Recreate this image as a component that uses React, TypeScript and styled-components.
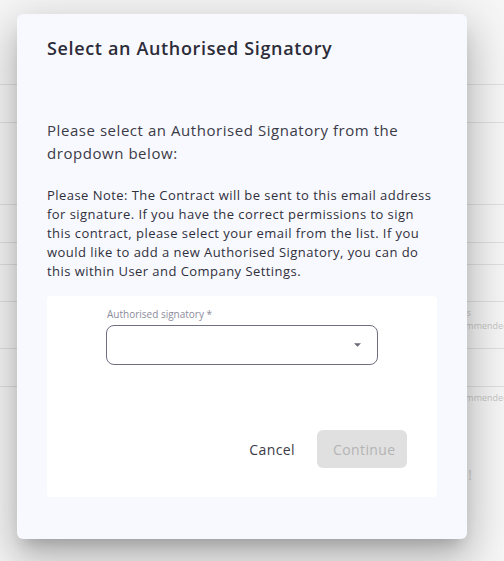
import React from "react";
import styled, { createGlobalStyle } from "styled-components";

const GlobalStyle = createGlobalStyle`
    html, body {
        margin: 0;
        padding: 0;
    }
    body {
        font-family: "Open Sans", "Liberation Sans", sans-serif;
        background: #f6f6f6;
    }
`;

const StyledPage = styled.div`
    position: relative;
    width: 504px;
    height: 561px;
    overflow: hidden;
    background: #f6f6f6;
`;

const StyledRows = styled.div`
    display: flex;
    flex-direction: column;
    padding-top: 84px;
`;

const StyledRow = styled.div<{ $height: number }>`
    height: ${props => props.$height}px;
    border-top: 1px solid #e0e0e0;
    box-sizing: border-box;
    padding: 4px 0 0 445px;
    font-size: 9px;
    line-height: 13px;
    color: #c6c6c6;
    display: flex;
    flex-direction: column;
`;

const StyledBang = styled.div`
    padding: 48px 0 0 468px;
    font-size: 15px;
    line-height: 20px;
    color: #d0d0d0;
`;

const StyledModal = styled.div`
    position: absolute;
    left: 17px;
    top: 14px;
    width: 450px;
    height: 525px;
    box-sizing: border-box;
    padding: 22px 30px 42px;
    border-radius: 6px;
    background: #f8f9fe;
    box-shadow: 0 11px 15px -7px rgba(0, 0, 0, 0.2),
        0 24px 38px 3px rgba(0, 0, 0, 0.14),
        0 9px 46px 8px rgba(0, 0, 0, 0.12);
    display: flex;
    flex-direction: column;
`;

const StyledTitle = styled.h2`
    margin: 0;
    font-size: 18px;
    line-height: 24px;
    font-weight: 600;
    letter-spacing: 0.65px;
    color: #2c2c39;
`;

const StyledLead = styled.p`
    margin: 59px 0 0;
    font-size: 15px;
    line-height: 23px;
    letter-spacing: 0.55px;
    color: #3b3b48;
`;

const StyledNote = styled.p`
    margin: 21px 0 0;
    font-size: 13px;
    line-height: 19px;
    letter-spacing: 0.45px;
    color: #30303d;
`;

const StyledPanel = styled.div`
    margin-top: 15px;
    flex: 1;
    background: #ffffff;
    border-radius: 4px;
    padding: 11px 30px 29px;
    display: flex;
    flex-direction: column;
`;

const StyledField = styled.div`
    width: 272px;
    align-self: center;
    display: flex;
    flex-direction: column;
    gap: 4px;
`;

const StyledLabel = styled.label`
    font-size: 10px;
    line-height: 14px;
    color: #8c8c9a;
    padding-left: 1px;
`;

const StyledSelect = styled.div`
    height: 40px;
    box-sizing: border-box;
    border: 1px solid #6f6f80;
    border-radius: 8px;
    display: flex;
    align-items: center;
    justify-content: flex-end;
    padding-right: 16px;
    color: #6a6a78;
`;

const StyledActions = styled.div`
    margin-top: auto;
    display: flex;
    justify-content: flex-end;
    align-items: center;
    gap: 6px;
`;

const StyledButton = styled.button<{ $variant: "text" | "filled" }>`
    height: 38px;
    border: none;
    border-radius: 6px;
    font-family: inherit;
    font-size: 14px;
    letter-spacing: 0.4px;
    padding: 0 16px;
    cursor: pointer;
    background: ${props => props.$variant === "filled" ? "#e0e0e0" : "transparent"};
    color: ${props => props.$variant === "filled" ? "#b4b4b4" : "#3a3a46"};
    width: ${props => props.$variant === "filled" ? "90px" : "auto"};
`;

const rows = [
    { height: 38, lines: [] },
    { height: 82, lines: [] },
    { height: 38, lines: [] },
    { height: 22, lines: [] },
    { height: 37, lines: [] },
    { height: 47, lines: ["Status", "Recommended"] },
    { height: 38, lines: [] },
    { height: 30, lines: ["Recommended"] },
];

export default function App() {
    return (
        <>
            <GlobalStyle/>
            <StyledPage>
                <StyledRows>
                    {rows.map((row, i) => (
                        <StyledRow key={i} $height={row.height}>
                            {row.lines.map((t, j) => <span key={j}>{t}</span>)}
                        </StyledRow>
                    ))}
                    <StyledBang>!</StyledBang>
                </StyledRows>

                <StyledModal>
                    <StyledTitle>Select an Authorised Signatory</StyledTitle>
                    <StyledLead>
                        Please select an Authorised Signatory from the dropdown below:
                    </StyledLead>
                    <StyledNote>
                        Please Note: The Contract will be sent to this email address for signature. If you have the
                        correct permissions to sign this contract, please select your email from the list. If you
                        would like to add a new Authorised Signatory, you can do this within User and Company
                        Settings.
                    </StyledNote>

                    <StyledPanel>
                        <StyledField>
                            <StyledLabel>Authorised signatory *</StyledLabel>
                            <StyledSelect>
                                <svg width="7" height="4" viewBox="0 0 10 5">
                                    <path d="M0 0l5 5 5-5z" fill="currentColor"/>
                                </svg>
                            </StyledSelect>
                        </StyledField>

                        <StyledActions>
                            <StyledButton $variant={"text"}>Cancel</StyledButton>
                            <StyledButton $variant={"filled"}>Continue</StyledButton>
                        </StyledActions>
                    </StyledPanel>
                </StyledModal>
            </StyledPage>
        </>
    );
}
